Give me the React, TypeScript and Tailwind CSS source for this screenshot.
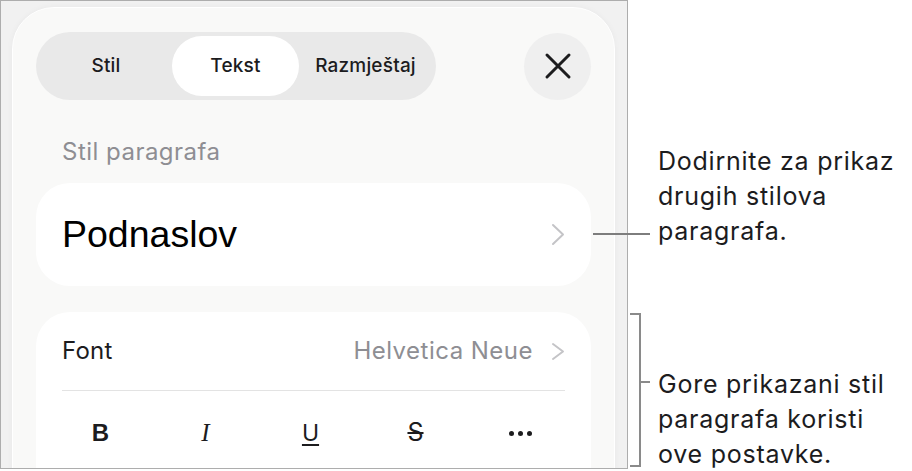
import React from 'react';

const sf = { fontFamily: 'Inter, "Noto Sans", sans-serif' };

const Chevron = ({ h = 23 }: { h?: number }) => (
  <svg width="14" height={h} viewBox={`0 0 14 ${h}`} fill="none">
    <path d={`M2 2 L12 ${h / 2} L2 ${h - 2}`} stroke="#c4c4c7" strokeWidth="2" strokeLinecap="round" strokeLinejoin="round" />
  </svg>
);

const tabs = [
  { label: 'Stil', w: 'w-[132px]', active: false },
  { label: 'Tekst', w: 'w-[127px]', active: true },
  { label: 'Razmještaj', w: 'w-[133px]', active: false },
];

export default function App() {
  return (
    <div className="relative flex w-[912px] h-[471px] bg-white overflow-hidden" style={sf}>
      {/* screenshot frame */}
      <div className="w-[628px] h-[469px] shrink-0 border border-[#adadad] bg-[#f1f1f1] overflow-hidden">
        <div className="ml-[11px] mt-[6px] w-[603px] h-[520px] rounded-[42px] bg-[#f9f9f8] border border-white shadow-[0_0_6px_rgba(0,0,0,0.04)] pl-[23px] pr-[23px] pt-[24px]">
          {/* header */}
          <div className="flex items-center justify-between">
            <div className="flex w-[400px] h-[68px] p-[4px] rounded-full bg-[#e9e9e9]">
              {tabs.map((t) => (
                <div
                  key={t.label}
                  className={`${t.w} h-full flex items-center justify-center rounded-full text-[19px] font-medium tracking-[0.01em] text-[#1c1c1e] ${
                    t.active ? 'bg-white' : ''
                  }`}
                >
                  {t.label}
                </div>
              ))}
            </div>
            <div className="w-[67px] h-[67px] rounded-full bg-[#efefef] flex items-center justify-center">
              <svg width="28" height="28" viewBox="0 0 28 28">
                <path d="M3 3 L25 25 M25 3 L3 25" stroke="#1c1c1e" strokeWidth="3" strokeLinecap="round" />
              </svg>
            </div>
          </div>

          {/* paragraph style */}
          <div className="mt-[38px] ml-[26px] h-[28px] leading-[28px] text-[24px] tracking-[0.02em] text-[#8e8e93]">Stil paragrafa</div>
          <div className="mt-[17px] h-[103px] rounded-[34px] bg-white flex items-center justify-between px-[26px]">
            <span className="text-[37.5px] text-black" style={{ fontFamily: '"Liberation Sans", Arial, sans-serif' }}>
              Podnaslov
            </span>
            <Chevron />
          </div>

          {/* font card */}
          <div className="mt-[26px] rounded-[34px] bg-white px-[12px] h-[200px]">
            <div className="mx-[14px] h-[79px] flex items-center justify-between border-b border-[#e3e3e3]">
              <span className="text-[24px] tracking-[0.01em] text-[#1c1c1e]">Font</span>
              <div className="flex items-center gap-[18px]">
                <span className="text-[24px] tracking-[0.02em] text-[#8e8e93]">Helvetica Neue</span>
                <Chevron h={19} />
              </div>
            </div>
            <div className="grid grid-cols-5 w-[525px] h-[84px] items-center text-[#1c1c1e]">
              <div className="text-center text-[24px] font-bold" style={{ fontFamily: '"Liberation Sans", Arial, sans-serif' }}>B</div>
              <div className="text-center text-[25px] italic" style={{ fontFamily: '"Liberation Serif", serif' }}>I</div>
              <div className="text-center text-[23px] underline underline-offset-[3px]">U</div>
              <div className="text-center text-[25px] line-through">S</div>
              <div className="flex justify-center gap-[4px]">
                <span className="w-[5px] h-[5px] rounded-full bg-[#1c1c1e]" />
                <span className="w-[5px] h-[5px] rounded-full bg-[#1c1c1e]" />
                <span className="w-[5px] h-[5px] rounded-full bg-[#1c1c1e]" />
              </div>
            </div>
          </div>
        </div>
      </div>

      {/* callouts */}
      <div className="flex-1 pl-[30px] pt-[144px] text-[25px] tracking-[0.03em] leading-[35px] text-[#1c1c1e] whitespace-nowrap">
        <p>
          Dodirnite za prikaz
          <br />
          drugih stilova
          <br />
          paragrafa.
        </p>
        <p className="mt-[118px]">
          Gore prikazani stil
          <br />
          paragrafa koristi
          <br />
          ove postavke.
        </p>
      </div>

      {/* leader lines */}
      <div className="absolute left-[593px] top-[233px] w-[57px] h-[2px] bg-[#7d7d7d]" />
      <div className="absolute left-[630px] top-[313px] w-[11px] h-[154px] border-2 border-l-0 border-[#8a8a8a]" />
      <div className="absolute left-[640px] top-[381px] w-[10px] h-[2px] bg-[#8a8a8a]" />
    </div>
  );
}
